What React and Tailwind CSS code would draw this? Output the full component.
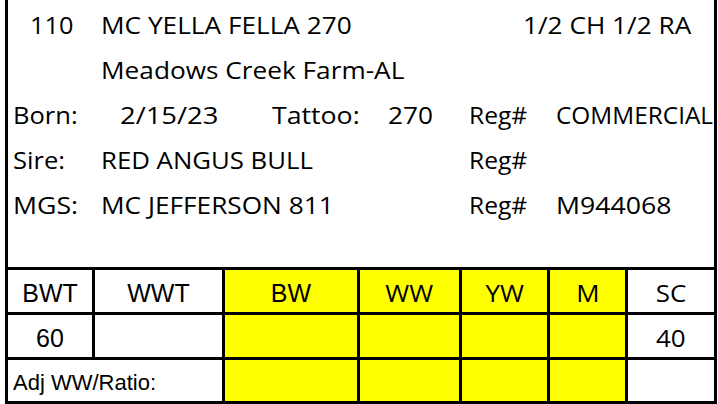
import React from "react";

const top = { fontFamily: "'Open Sans', Lato, sans-serif" };
const arial = { fontFamily: "'Liberation Sans', Arial, sans-serif" };

function Row({ children }) {
  return <div className="flex h-[45px] items-center whitespace-nowrap text-[23px] text-black">{children}</div>;
}

function T({ children }) {
  return <span className="inline-block origin-left scale-x-[1.14]">{children}</span>;
}

export default function App() {
  return (
    <div className="w-[718px] h-[404px] bg-white overflow-hidden">
      <div className="ml-[5px] w-[712px] h-[404px] border-x-[3px] border-black flex flex-col">
        <div className="h-[267px] pt-[3px]" style={top}>
          <Row>
            <span className="w-[22px]" />
            <span className="w-[71px]"><span className="inline-block origin-left scale-x-[1.1]">110</span></span>
            <span className="w-[422px]"><T>MC YELLA FELLA 270</T></span>
            <span><T>1/2 CH 1/2 RA</T></span>
          </Row>
          <Row>
            <span className="w-[93px]" />
            <span><T>Meadows Creek Farm-AL</T></span>
          </Row>
          <Row>
            <span className="w-[5px]" />
            <span className="w-[107px]"><span className="inline-block origin-left scale-x-[1.11]">Born:</span></span>
            <span className="w-[152px]"><span className="inline-block origin-left scale-x-[1.19]">2/15/23</span></span>
            <span className="w-[116px]"><span className="inline-block origin-left scale-x-[1.16]">Tattoo:</span></span>
            <span className="w-[81px]"><T>270</T></span>
            <span className="w-[87px]"><span className="inline-block origin-left scale-x-[1.07]">Reg#</span></span>
            <span><span className="inline-block origin-left scale-x-[1.06]">COMMERCIAL</span></span>
          </Row>
          <Row>
            <span className="w-[5px]" />
            <span className="w-[88px]"><span className="inline-block origin-left scale-x-[1.11]">Sire:</span></span>
            <span className="w-[368px]"><span className="inline-block origin-left scale-x-[1.12]">RED ANGUS BULL</span></span>
            <span><span className="inline-block origin-left scale-x-[1.07]">Reg#</span></span>
          </Row>
          <Row>
            <span className="w-[5px]" />
            <span className="w-[88px]"><span className="inline-block origin-left scale-x-[1.16]">MGS:</span></span>
            <span className="w-[368px]"><T>MC JEFFERSON 811</T></span>
            <span className="w-[87px]"><span className="inline-block origin-left scale-x-[1.07]">Reg#</span></span>
            <span><span className="inline-block origin-left scale-x-[1.16]">M944068</span></span>
          </Row>
        </div>
        <div className="flex-1 border-t-[3px] border-black grid grid-cols-[84px_3px_127px_3px_132px_3px_99px_3px_85px_3px_75px_3px_86px] grid-rows-[42px_3px_42px_3px_41px] bg-black border-b-[3px]">
          <div className="bg-white flex items-center justify-center text-[25px] pt-[5px]" style={arial}>BWT</div>
          <div />
          <div className="bg-white flex items-center justify-center text-[25px] pt-[5px]" style={arial}>WWT</div>
          <div />
          <div className="bg-[#ffff00] flex items-center justify-center text-[25px] pt-[5px]" style={arial}>BW</div>
          <div />
          <div className="bg-[#ffff00] flex items-center justify-center text-[24px] pt-[4px]" style={top}>
            <span className="inline-block scale-x-[1.08]">WW</span>
          </div>
          <div />
          <div className="bg-[#ffff00] flex items-center justify-center text-[24px] pt-[4px]" style={top}>
            <span className="inline-block scale-x-[1.08]">YW</span>
          </div>
          <div />
          <div className="bg-[#ffff00] flex items-center justify-center text-[24px] pt-[4px]" style={top}>
            <span className="inline-block scale-x-[1.08]">M</span>
          </div>
          <div />
          <div className="bg-white flex items-center justify-center text-[24px] pt-[4px]" style={top}>
            <span className="inline-block scale-x-[1.08]">SC</span>
          </div>

          <div className="col-span-13" />

          <div className="bg-white flex items-center justify-center text-[25px] pt-[5px]" style={arial}>60</div>
          <div />
          <div className="bg-white" />
          <div />
          <div className="bg-[#ffff00]" />
          <div />
          <div className="bg-[#ffff00]" />
          <div />
          <div className="bg-[#ffff00]" />
          <div />
          <div className="bg-[#ffff00]" />
          <div />
          <div className="bg-white flex items-center justify-center text-[24px] pt-[4px]" style={top}>
            <span className="inline-block scale-x-[1.08]">40</span>
          </div>

          <div className="col-span-13" />

          <div className="col-span-3 bg-white flex items-center pl-[5px] pt-[3px] text-[22px]" style={arial}>Adj WW/Ratio:</div>
          <div />
          <div className="bg-[#ffff00]" />
          <div />
          <div className="bg-[#ffff00]" />
          <div />
          <div className="bg-[#ffff00]" />
          <div />
          <div className="bg-[#ffff00]" />
          <div />
          <div className="bg-white" />
        </div>
      </div>
    </div>
  );
}
